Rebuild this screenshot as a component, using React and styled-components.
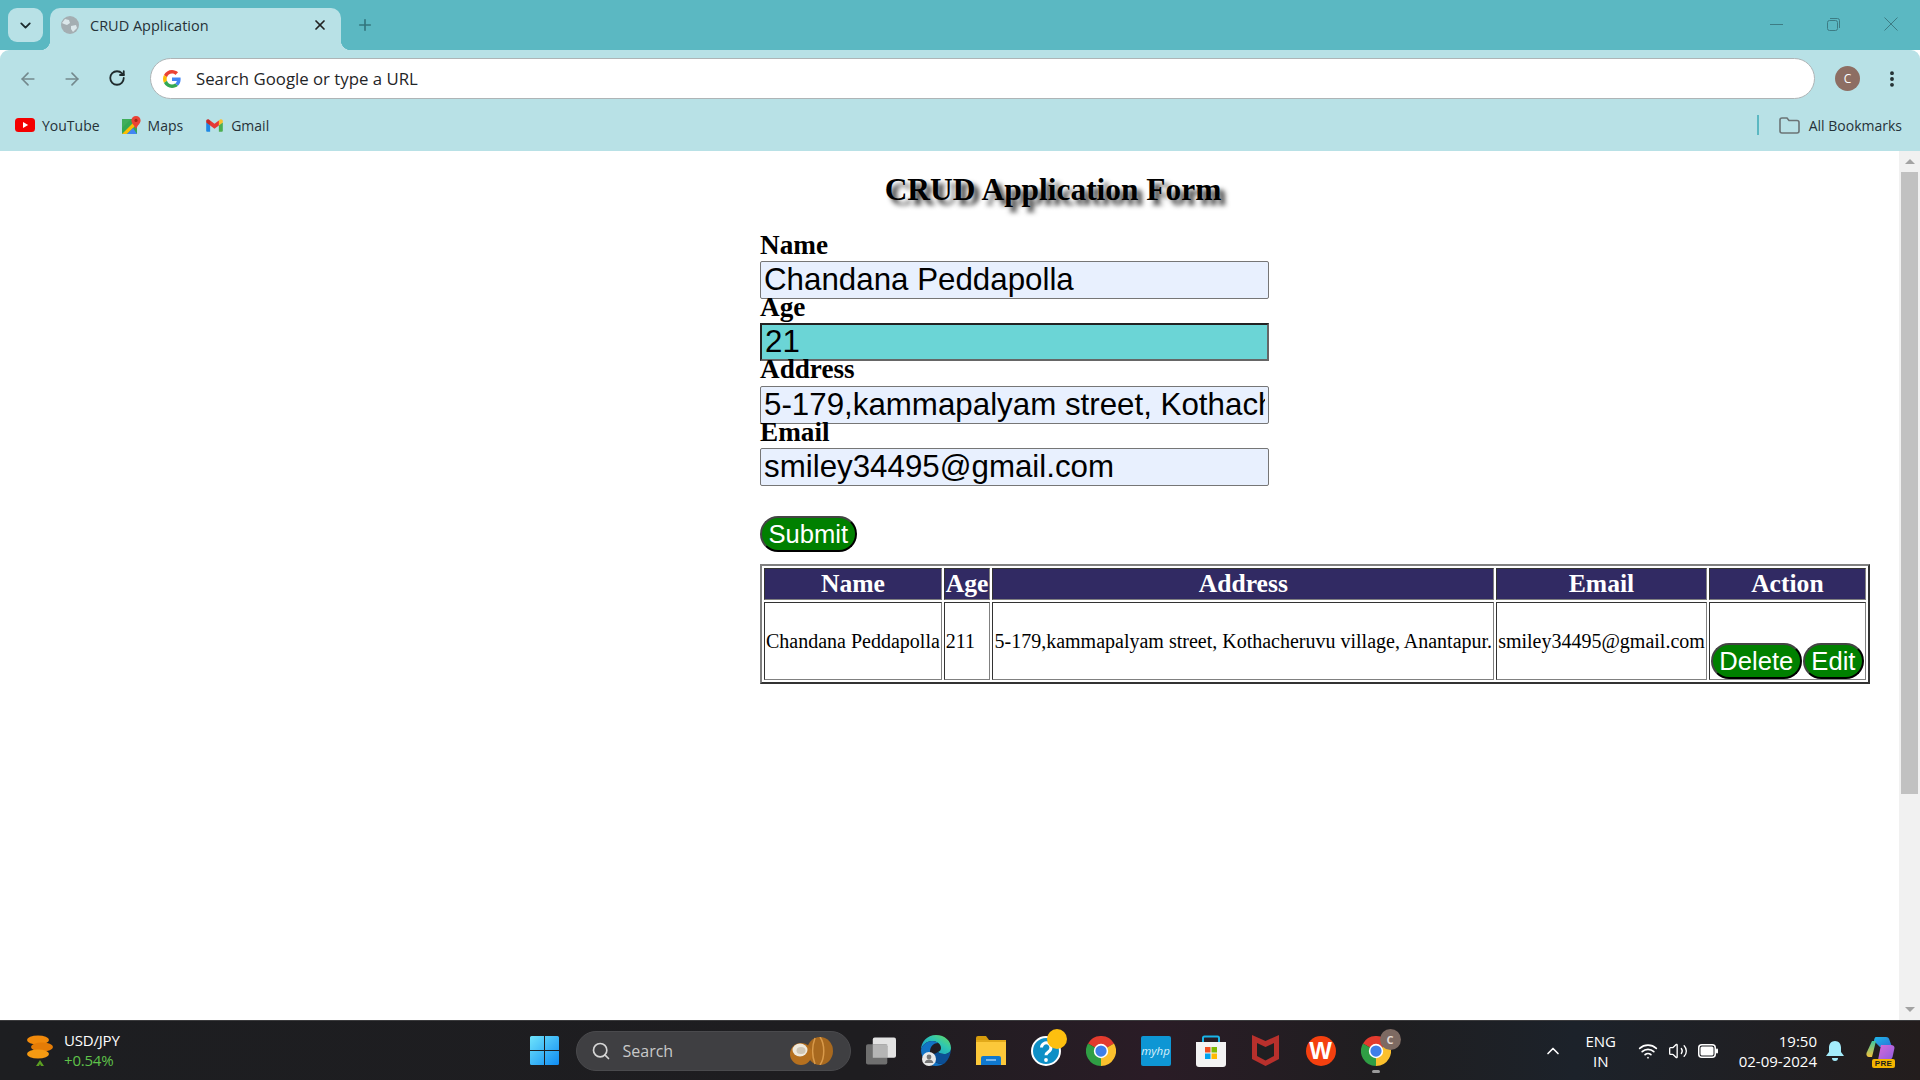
import React from 'react'
import styled, { createGlobalStyle } from 'styled-components'
import {
  ArrowLeft,
  ArrowRight,
  ChevronDown,
  ChevronUp,
  EllipsisVertical,
  Plus,
  RotateCw,
  Search,
  Volume2,
  Wifi,
  X,
} from 'lucide-react'

const UI_FONT = '"Open Sans", "Noto Sans", sans-serif'
const SERIF = '"Liberation Serif", "Times New Roman", serif'
const ARIAL = '"Liberation Sans", Arial, sans-serif'
const FRAME = '#5bb8c2'
const TOOLBAR = '#b8e1e6'

const GlobalStyle = createGlobalStyle`
  html, body { margin: 0; padding: 0; height: 100%; overflow: hidden; }
  body { font-family: ${SERIF}; background: #fff; }
`

const Screen = styled.div`
  width: 1920px;
  height: 1080px;
  display: flex;
  flex-direction: column;
  overflow: hidden;
`

/* browser chrome */
const TabStrip = styled.div`
  height: 50px;
  flex: none;
  background: ${FRAME};
  display: flex;
  align-items: flex-end;
  padding-left: 8px;
`
const TabSearch = styled.div`
  width: 35px;
  height: 34px;
  margin-bottom: 8px;
  margin-right: 7px;
  border-radius: 9px;
  background: ${TOOLBAR};
  color: #1c2b2e;
  display: flex;
  align-items: center;
  justify-content: center;
`
const Tab = styled.div`
  position: relative;
  width: 291px;
  height: 42px;
  box-sizing: border-box;
  padding: 0 13px 8px 11px;
  background: ${TOOLBAR};
  border-radius: 10px 10px 0 0;
  display: flex;
  align-items: center;
  font: 14.5px ${UI_FONT};
  color: #263238;

  &::before,
  &::after {
    content: '';
    position: absolute;
    bottom: 0;
    width: 10px;
    height: 10px;
  }
  &::before {
    left: -10px;
    background: radial-gradient(circle at 0 0, transparent 10px, ${TOOLBAR} 10.5px);
  }
  &::after {
    right: -10px;
    background: radial-gradient(circle at 100% 0, transparent 10px, ${TOOLBAR} 10.5px);
  }
`
const TabTitle = styled.span`
  flex: 1;
  margin-left: 11px;
`
const NewTab = styled.div`
  margin: 0 0 16px 15px;
  color: #33757d;
  display: flex;
`
const WindowControls = styled.div`
  margin-left: auto;
  height: 50px;
  display: flex;
  align-items: center;
  gap: 44px;
  padding-right: 22px;
  padding-bottom: 2px;
  box-sizing: border-box;
`
const Toolbar = styled.div`
  height: 63px;
  flex: none;
  background: ${TOOLBAR};
  border-radius: 9px 9px 0 0;
  display: flex;
  align-items: center;
  box-sizing: border-box;
  padding: 0 16px 6px 18px;
`
const NavButton = styled.div`
  width: 20px;
  height: 20px;
  margin-right: ${p => p.$gap}px;
  color: ${p => (p.$off ? '#74898d' : '#1f2a2c')};
  display: flex;
`
const AddressBar = styled.div`
  width: 1665px;
  height: 41px;
  box-sizing: border-box;
  background: #fff;
  border: 1px solid #aeb4b6;
  border-radius: 21px;
  display: flex;
  align-items: center;
  padding-left: 12px;
  gap: 15px;
  font: 16.8px ${UI_FONT};
  color: #1f2527;
`
const Avatar = styled.div`
  width: 25px;
  height: 25px;
  margin-left: 20px;
  border-radius: 50%;
  background: #8d6e63;
  color: #fff;
  font: 12px ${UI_FONT};
  display: flex;
  align-items: center;
  justify-content: center;
`
const MenuDots = styled.div`
  margin-left: 22px;
  color: #1f2a2c;
  display: flex;
`
const BookmarksBar = styled.div`
  height: 38px;
  flex: none;
  background: ${TOOLBAR};
  box-sizing: border-box;
  padding: 0 18px 14px 15px;
  display: flex;
  align-items: center;
  font: 14px ${UI_FONT};
  color: #263238;
`
const Bookmark = styled.div`
  display: flex;
  align-items: center;
  gap: 7px;
  margin-right: 22px;
`
const BookmarkEnd = styled.div`
  margin-left: auto;
  display: flex;
  align-items: center;
`
const BarDivider = styled.div`
  width: 2px;
  height: 20px;
  background: ${FRAME};
  margin-right: 20px;
`

/* page */
const Viewport = styled.div`
  flex: 1;
  min-height: 0;
  display: flex;
  background: #fff;
`
const Content = styled.main`
  flex: 1;
  padding: 21px 0 0 760px;
`
const Scrollbar = styled.div`
  width: 21px;
  flex: none;
  background: #f1f1f1;
  box-sizing: border-box;
  padding: 0 2px 0 2px;
  display: flex;
  flex-direction: column;
  align-items: center;
`
const ScrollArrow = styled.div`
  height: 21px;
  flex: none;
  display: flex;
  align-items: center;
  width: 0;
  &::before {
    content: '';
    margin-left: -5px;
    border-left: 5px solid transparent;
    border-right: 5px solid transparent;
    ${p => (p.$down ? 'border-top: 5px solid #a3a3a3;' : 'border-bottom: 5px solid #a3a3a3;')}
  }
`
const ScrollThumb = styled.div`
  width: 100%;
  height: 622px;
  background: #c1c1c1;
`
const ScrollRest = styled.div`
  flex: 1;
`
const Title = styled.h1`
  width: 586px;
  margin: 0 0 28.5px;
  font: bold 31.4px/36px ${SERIF};
  text-align: center;
  color: #000;
  text-shadow: 5px 5px 5px #333;
`
const Form = styled.form`
  display: flex;
  flex-direction: column;
  align-items: flex-start;
`
const Field = styled.div`
  display: flex;
  flex-direction: column;
`
const Label = styled.label`
  height: 24.4px;
  font: bold 27.2px/17.4px ${SERIF};
  color: #000;
`
const Input = styled.input`
  width: 509px;
  height: 38px;
  box-sizing: border-box;
  margin: 0;
  padding: 1px 3px;
  font: 31.3px ${ARIAL};
  color: #000;
  background: ${p => (p.$active ? '#6bd5d6' : '#e8f0fe')};
  border: ${p => (p.$active ? '2px solid' : '1px solid #767676')};
  border-color: ${p => (p.$active ? '#222 #666 #666 #222' : '#767676')};
  border-radius: ${p => (p.$active ? '0' : '2px')};
  outline: none;
`
const PillButton = styled.button`
  height: 36px;
  box-sizing: border-box;
  margin: ${p => p.$margin || '0'};
  padding: 0 6.5px;
  font: 25.6px ${ARIAL};
  color: #fff;
  background: #008000;
  border: 2px solid;
  border-color: #444 #000 #000 #444;
  border-radius: 20px;
`
const DataTable = styled.table`
  margin-top: 12px;
  border-collapse: separate;
  border-spacing: 2px;
  border: 2px solid;
  border-color: #808080 #333 #333 #808080;
`
const HeadCell = styled.th`
  padding: 1px;
  height: 28px;
  background: #312a63;
  color: #fff;
  font: bold 25.6px/28px ${SERIF};
  border: 1px solid;
  border-color: #333 #808080 #808080 #333;
`
const BodyCell = styled.td`
  padding: 1px;
  font: 20px ${SERIF};
  color: #000;
  border: 1px solid;
  border-color: #333 #808080 #808080 #333;
`
const ActionRow = styled.div`
  display: flex;
  gap: 1px;
  margin-top: 39px;
  margin-bottom: -1px;
`

/* taskbar */
const Taskbar = styled.footer`
  height: 60px;
  flex: none;
  box-sizing: border-box;
  border-top: 1px solid #3b3b3d;
  background: linear-gradient(90deg, #1d1e21 0%, #1e1d20 45%, #2a1c26 60%, #1f1e20 72%, #1c222a 82%, #231d1d 100%);
  display: grid;
  grid-template-columns: 1fr auto 1fr;
  align-items: center;
  color: #fff;
  font: 14px ${UI_FONT};
`
const Widget = styled.div`
  display: flex;
  align-items: center;
  gap: 10px;
  padding-left: 26px;
`
const WidgetText = styled.div`
  font-size: 15px;
  line-height: 20px;
  letter-spacing: -0.2px;
  margin-top: -2px;
`
const Change = styled.div`
  color: #5fc24a;
`
const Center = styled.div`
  display: flex;
  align-items: center;
`
const TaskSearch = styled.div`
  width: 275px;
  height: 40px;
  margin: 0 15px 0 17px;
  box-sizing: border-box;
  padding: 0 15px 0 14px;
  background: #3f3f42;
  border: 1px solid #4a4a4d;
  border-radius: 20px;
  display: flex;
  align-items: center;
  gap: 12px;
  font-size: 16px;
  color: #c9c9c9;
`
const SearchWord = styled.span`
  flex: 1;
`
const TaskIcon = styled.div`
  position: relative;
  width: 30px;
  height: 30px;
  margin-right: 25px;
  display: flex;
  align-items: center;
  justify-content: center;
  &:last-child {
    margin-right: 0;
  }
`
const RunningDot = styled.div`
  position: absolute;
  bottom: -7px;
  left: 11px;
  width: 8px;
  height: 3px;
  border-radius: 2px;
  background: #9a9a9a;
`
const CountBadge = styled.div`
  position: absolute;
  top: -7px;
  right: -10px;
  width: 21px;
  height: 21px;
  border-radius: 50%;
  background: #7d6a62;
  color: #e4dad5;
  font: bold 11px/21px ${UI_FONT};
  text-align: center;
`
const HpTile = styled.div`
  width: 30px;
  height: 30px;
  box-sizing: border-box;
  border-radius: 2px;
  background: #0e96d4;
  color: #d9f1fb;
  font: italic 11.5px/30px ${UI_FONT};
  text-align: center;
`
const WpsLogo = styled.div`
  width: 30px;
  height: 30px;
  border-radius: 50%;
  background: #f4400f;
  color: #fff;
  font: bold 24px/30px ${ARIAL};
  text-align: center;
`
const Tray = styled.div`
  justify-self: end;
  display: flex;
  align-items: center;
  padding-right: 25px;
`
const Chevron = styled.div`
  display: flex;
  margin-right: 18px;
`
const Lang = styled.div`
  width: 40px;
  margin-right: 17px;
  text-align: center;
  font-size: 15px;
  line-height: 20px;
`
const TrayIcons = styled.div`
  display: flex;
  align-items: center;
  gap: 10px;
`
const Clock = styled.div`
  margin-left: 21px;
  text-align: right;
  font-size: 15px;
  line-height: 20px;
`
const BellSlot = styled.div`
  display: flex;
  margin: 0 22px 0 9px;
`
const Copilot = styled.div`
  position: relative;
  width: 29px;
  height: 30px;
`
const PreTag = styled.div`
  position: absolute;
  right: 0;
  bottom: -2px;
  width: 23px;
  height: 9px;
  background: #f4b400;
  border-radius: 2px;
  color: #1b1b1b;
  font: bold 8px/9px ${ARIAL};
  text-align: center;
  letter-spacing: 0.3px;
`

/* drawn icons */
const Globe = () => (
  <svg width="18" height="18" viewBox="0 0 18 18">
    <circle cx="9" cy="9" r="9" fill="#a4aeb2" />
    <path d="M4 3l4 1 1 3-3 2-3-1-2-1zM10 10l5-1 1 3-4 4-2-3z" fill="#dbe7ea" />
  </svg>
)
const GoogleG = () => (
  <svg width="18" height="18" viewBox="0 0 48 48">
    <path fill="#EA4335" d="M24 9.5c3.54 0 6.71 1.22 9.21 3.6l6.85-6.85C35.9 2.38 30.47 0 24 0 14.62 0 6.51 5.38 2.56 13.22l7.98 6.19C12.43 13.72 17.74 9.5 24 9.5z" />
    <path fill="#4285F4" d="M46.98 24.55c0-1.57-.15-3.09-.38-4.55H24v9.02h12.94c-.58 2.96-2.26 5.48-4.78 7.18l7.73 6c4.51-4.18 7.09-10.36 7.09-17.65z" />
    <path fill="#FBBC05" d="M10.53 28.59c-.48-1.45-.76-2.99-.76-4.59s.27-3.14.76-4.59l-7.98-6.19C.92 16.46 0 20.12 0 24c0 3.88.92 7.54 2.56 10.78l7.97-6.19z" />
    <path fill="#34A853" d="M24 48c6.48 0 11.93-2.13 15.89-5.81l-7.73-6c-2.15 1.45-4.92 2.3-8.16 2.3-6.26 0-11.57-4.22-13.47-9.91l-7.98 6.19C6.51 42.62 14.62 48 24 48z" />
  </svg>
)
const YouTubeIcon = () => (
  <svg width="20" height="14" viewBox="0 0 20 14">
    <rect width="20" height="14" rx="3.5" fill="#f40000" />
    <path d="M8 4l5.2 3L8 10z" fill="#fff" />
  </svg>
)
const MapsIcon = () => (
  <svg width="19" height="19" viewBox="0 0 19 19">
    <rect x="0" y="3" width="15" height="15" fill="#34a853" />
    <path d="M0 18L15 3v5L5 18z" fill="#fbbc04" />
    <path d="M5 18L11 12l4 6z" fill="#4285f4" />
    <path d="M0 3h9L0 12z" fill="#3fae5a" />
    <path d="M14 0c2.6 0 4.6 2 4.6 4.4 0 3-3 4.5-4.6 8.6-1.6-4.1-4.6-5.6-4.6-8.6C9.4 2 11.4 0 14 0z" fill="#ea4335" />
    <circle cx="14" cy="4.4" r="1.6" fill="#a52714" />
  </svg>
)
const GmailIcon = () => (
  <svg width="19" height="19" viewBox="0 0 48 48">
    <path fill="#4caf50" d="M45,16.2l-5,2.75l-5,4.75L35,40h7c1.657,0,3-1.343,3-3V16.2z" />
    <path fill="#1e88e5" d="M3,16.2l3.614,1.71L13,23.7V40H6c-1.657,0-3-1.343-3-3V16.2z" />
    <polygon fill="#e53935" points="35,11.2 24,19.45 13,11.2 12,17 13,23.7 24,31.95 35,23.7 36,17" />
    <path fill="#c62828" d="M3,12.298V16.2l10,7.5V11.2L9.876,8.859C9.132,8.301,8.228,8,7.298,8h0C4.924,8,3,9.924,3,12.298z" />
    <path fill="#fbc02d" d="M45,12.298V16.2l-10,7.5V11.2l3.124-2.341C38.868,8.301,39.772,8,40.702,8h0C43.076,8,45,9.924,45,12.298z" />
  </svg>
)
const FolderOutline = () => (
  <svg width="21" height="17" viewBox="0 0 21 17" style={{ marginRight: 9 }}>
    <path d="M1 3a2 2 0 0 1 2-2h5l2 2.5h8a2 2 0 0 1 2 2V14a2 2 0 0 1-2 2H3a2 2 0 0 1-2-2z" fill="none" stroke="#6b7476" strokeWidth="1.6" />
  </svg>
)
const Minimize = () => (
  <svg width="13" height="13" viewBox="0 0 13 13">
    <path d="M0 6.5h13" stroke="#3d7c84" strokeWidth="1" />
  </svg>
)
const Restore = () => (
  <svg width="13" height="13" viewBox="0 0 13 13" fill="none" stroke="#3d7c84">
    <rect x="0.5" y="2.5" width="10" height="10" rx="2" />
    <path d="M3 .5h7.5a2 2 0 0 1 2 2V10" />
  </svg>
)
const CloseWindow = () => (
  <svg width="14" height="14" viewBox="0 0 14 14">
    <path d="M.5.5l13 13M13.5.5l-13 13" stroke="#3d7c84" strokeWidth="1" />
  </svg>
)
const Coins = () => (
  <svg width="28" height="34" viewBox="0 0 28 34">
    <ellipse cx="12" cy="6" rx="11" ry="4.5" fill="#f18a0b" />
    <ellipse cx="16" cy="13" rx="11" ry="4.5" fill="#e57c06" />
    <ellipse cx="12" cy="20" rx="11" ry="4.5" fill="#f59a12" />
    <path d="M14 26l4 6h-3l-1-2-1 2h-3z" fill="#5b9e22" />
  </svg>
)
const WindowsLogo = () => (
  <svg width="29" height="29" viewBox="0 0 29 29">
    <defs>
      <linearGradient id="win" x1="0" y1="0" x2="1" y2="1">
        <stop offset="0" stopColor="#6fe4fb" />
        <stop offset="1" stopColor="#0f8cf3" />
      </linearGradient>
    </defs>
    <path d="M0 1.5A1.5 1.5 0 0 1 1.5 0H14v14H0zM15 0h12.5A1.5 1.5 0 0 1 29 1.5V14H15zM0 15h14v14H1.5A1.5 1.5 0 0 1 0 27.5zM15 15h14v12.5a1.5 1.5 0 0 1-1.5 1.5H15z" fill="url(#win)" />
  </svg>
)
const Coconut = () => (
  <svg width="46" height="28" viewBox="0 0 46 28">
    <ellipse cx="31" cy="14" rx="13" ry="14" fill="#a8691f" />
    <path d="M31 0c5 7 5 21 0 28M26 1c-3 8-3 18 0 26" stroke="#d99a4a" strokeWidth="1.5" fill="none" />
    <ellipse cx="12" cy="17" rx="11" ry="11" fill="#b5701f" />
    <ellipse cx="11" cy="13" rx="7.5" ry="6.5" fill="#efe9dc" />
    <ellipse cx="12" cy="13.500" rx="4.500" ry="3.500" fill="#cfc6b5" />
  </svg>
)
const TaskView = () => (
  <svg width="31" height="30" viewBox="0 0 31 30">
    <rect x="7" y="1" width="24" height="21" rx="2" fill="#e3e3e3" />
    <rect x="0" y="8" width="22" height="21" rx="2" fill="#6f6f6f" />
    <rect x="7" y="8" width="15" height="14" fill="#b5b5b5" />
  </svg>
)
const Edge = () => (
  <svg width="30" height="31" viewBox="0 0 30 31">
    <defs>
      <linearGradient id="edgeTop" x1="0" y1="1" x2="1" y2="0">
        <stop offset="0" stopColor="#0f8fd6" />
        <stop offset="0.6" stopColor="#2fc6b0" />
        <stop offset="1" stopColor="#6bdc5a" />
      </linearGradient>
    </defs>
    <path d="M15 0c9 0 15 6 15 13 0 4-3 6-7 6-3 0-5-1-6-2 2-1 3-2 3-4 0-4-4-7-9-7C6 6 1 10 0 15 0 7 6 0 15 0z" fill="url(#edgeTop)" />
    <path d="M0 15c1-5 6-9 11-9 3 0 5 1 6 2-4 0-8 3-8 9 0 6 5 12 12 12 1 0 2 0 3-1-3 2-6 3-9 3C7 31 0 24 0 15z" fill="#1273c4" />
    <path d="M17 17c1 1 3 2 6 2 4 0 7-2 7-6 0 7-3 12-6 15-1 1-2 1-3 1-7 0-12-6-12-12 1 2 4 3 8 0z" fill="#0c4f95" />
    <circle cx="8" cy="24" r="7" fill="#e9e9e9" />
    <circle cx="8" cy="22" r="2.4" fill="#777" />
    <path d="M3.6 28c.6-2.6 2.4-3.4 4.4-3.4s3.8.8 4.4 3.4z" fill="#777" />
  </svg>
)
const Explorer = () => (
  <svg width="30" height="29" viewBox="0 0 30 29">
    <path d="M0 2a2 2 0 0 1 2-2h8l3 4H0z" fill="#d79c0d" />
    <rect y="4" width="30" height="25" fill="#fcc83a" />
    <rect y="4" width="30" height="2" fill="#e2a91a" />
    <path d="M5 22a2 2 0 0 1 2-2h16a2 2 0 0 1 2 2v7H5z" fill="#0f78cf" />
    <path d="M10 24h10" stroke="#bfe3ff" strokeWidth="1.2" />
  </svg>
)
const HelpIcon = () => (
  <svg width="30" height="30" viewBox="0 0 30 30" overflow="visible">
    <circle cx="15" cy="15" r="14" fill="#0e8fc6" stroke="#fff" strokeWidth="2" />
    <path d="M10.5 11.500a4.700 4.700 0 1 1 7 4.200c-1.600 1-2.500 1.700-2.500 3.600" fill="none" stroke="#fff" strokeWidth="3" />
    <circle cx="15" cy="24" r="1.900" fill="#fff" />
    <circle cx="26" cy="3" r="10" fill="#fdbf0f" />
  </svg>
)
const Chrome = () => (
  <svg width="30" height="30" viewBox="0 0 48 48">
    <path d="M24 24L3.2 12A24 24 0 0 1 44.8 12z" fill="#e33b2e" />
    <path d="M24 24L3.2 12A24 24 0 0 0 24 48z" fill="#2f9e44" />
    <path d="M24 24L44.8 12A24 24 0 0 1 24 48z" fill="#fbc02d" />
    <circle cx="24" cy="24" r="11.5" fill="#fff" />
    <circle cx="24" cy="24" r="9" fill="#3f7fe8" />
  </svg>
)
const Store = () => (
  <svg width="30" height="32" viewBox="0 0 30 32">
    <path d="M7 7V3a1.5 1.5 0 0 1 1.5-1.5h13A1.5 1.5 0 0 1 23 3v4" fill="none" stroke="#19b4e8" strokeWidth="2" />
    <path d="M0 7h30v22a3 3 0 0 1-3 3H3a3 3 0 0 1-3-3z" fill="#f3f3f3" />
    <rect x="9" y="12" width="5.5" height="5.5" fill="#f25022" />
    <rect x="15.5" y="12" width="5.5" height="5.5" fill="#7fba00" />
    <rect x="9" y="18.5" width="5.5" height="5.5" fill="#00a4ef" />
    <rect x="15.5" y="18.5" width="5.5" height="5.5" fill="#ffb900" />
  </svg>
)
const McAfee = () => (
  <svg width="27" height="31" viewBox="0 0 27 31">
    <path d="M0 0l13.5 6L27 0v24l-13.5 7L0 24z" fill="#b8302c" />
    <path d="M5 8l8.5 4L22 8v13l-8.5 4.5L5 21z" fill="#1f1f21" />
  </svg>
)
const WifiTray = () => <Wifi size={20} color="#fff" strokeWidth={2} />
const Battery = () => (
  <svg width="20" height="14" viewBox="0 0 20 14">
    <rect x="0.75" y="0.75" width="16.5" height="12.5" rx="3" fill="none" stroke="#fff" strokeWidth="1.5" />
    <rect x="2.500" y="2.500" width="13" height="9" rx="1.5" fill="#fff" />
    <rect x="18" y="4.500" width="2" height="5" rx="1" fill="#fff" />
  </svg>
)
const Bell = () => (
  <svg width="18" height="20" viewBox="0 0 18 20">
    <path d="M9 0c3.600 0 6 2.800 6 6.500V11l3 4H0l3-4V6.500C3 2.800 5.400 0 9 0z" fill="#a4ecfb" />
    <path d="M6 17h6a3 3 0 0 1-6 0z" fill="#a4ecfb" />
  </svg>
)
const CopilotMark = () => (
  <svg width="29" height="26" viewBox="0 0 29 26">
    <defs>
      <linearGradient id="cpA" x1="0" y1="0" x2="1" y2="1">
        <stop offset="0" stopColor="#1fb8e8" />
        <stop offset="1" stopColor="#2d6fd8" />
      </linearGradient>
      <linearGradient id="cpB" x1="0" y1="0" x2="0" y2="1">
        <stop offset="0" stopColor="#3dc7a0" />
        <stop offset="1" stopColor="#f3c13a" />
      </linearGradient>
      <linearGradient id="cpC" x1="0" y1="0" x2="1" y2="1">
        <stop offset="0" stopColor="#d76bd8" />
        <stop offset="1" stopColor="#8d5ce0" />
      </linearGradient>
    </defs>
    <path d="M10 1h10c2 0 3 1 3.500 3L26 11H14L8 5c0-2 1-4 2-4z" fill="url(#cpA)" />
    <path d="M6 5h4l-4 16H3C1 21 0 19 .5 17z" fill="url(#cpB)" />
    <path d="M15 9h10c2 0 3.500 1 3.500 3l-2 9c-.5 2-2 3-4 3H12z" fill="url(#cpC)" />
  </svg>
)

const App = () => {
  return (
    <Screen>
      <GlobalStyle />
      <TabStrip>
        <TabSearch>
          <ChevronDown size={17} strokeWidth={2.6} />
        </TabSearch>
        <Tab>
          <Globe />
          <TabTitle>CRUD Application</TabTitle>
          <X size={16} strokeWidth={2.6} color="#222" />
        </Tab>
        <NewTab>
          <Plus size={18} strokeWidth={2.2} />
        </NewTab>
        <WindowControls>
          <Minimize />
          <Restore />
          <CloseWindow />
        </WindowControls>
      </TabStrip>
      <Toolbar>
        <NavButton $off $gap={24}>
          <ArrowLeft size={20} />
        </NavButton>
        <NavButton $off $gap={26}>
          <ArrowRight size={20} />
        </NavButton>
        <NavButton $gap={22}>
          <RotateCw size={18} strokeWidth={2.4} />
        </NavButton>
        <AddressBar>
          <GoogleG />
          Search Google or type a URL
        </AddressBar>
        <Avatar>C</Avatar>
        <MenuDots>
          <EllipsisVertical size={20} strokeWidth={2.6} />
        </MenuDots>
      </Toolbar>
      <BookmarksBar>
        <Bookmark>
          <YouTubeIcon />
          YouTube
        </Bookmark>
        <Bookmark>
          <MapsIcon />
          Maps
        </Bookmark>
        <Bookmark>
          <GmailIcon />
          Gmail
        </Bookmark>
        <BookmarkEnd>
          <BarDivider />
          <FolderOutline />
          All Bookmarks
        </BookmarkEnd>
      </BookmarksBar>

      <Viewport>
        <Content>
          <Title>CRUD Application Form</Title>
          <Form onSubmit={e => e.preventDefault()}>
            <Field>
              <Label>Name</Label>
              <Input readOnly value="Chandana Peddapolla" />
            </Field>
            <Field>
              <Label>Age</Label>
              <Input readOnly $active value="21" />
            </Field>
            <Field>
              <Label>Address</Label>
              <Input readOnly value="5-179,kammapalyam street, Kothacheruvu village, Anantapur." />
            </Field>
            <Field>
              <Label>Email</Label>
              <Input readOnly value="smiley34495@gmail.com" />
            </Field>
            <PillButton $margin="30px 0 0">Submit</PillButton>
          </Form>
          <DataTable>
            <thead>
              <tr>
                <HeadCell>Name</HeadCell>
                <HeadCell>Age</HeadCell>
                <HeadCell>Address</HeadCell>
                <HeadCell>Email</HeadCell>
                <HeadCell>Action</HeadCell>
              </tr>
            </thead>
            <tbody>
              <tr>
                <BodyCell>Chandana Peddapolla</BodyCell>
                <BodyCell>211</BodyCell>
                <BodyCell>5-179,kammapalyam street, Kothacheruvu village, Anantapur.</BodyCell>
                <BodyCell>smiley34495@gmail.com</BodyCell>
                <BodyCell>
                  <ActionRow>
                    <PillButton>Delete</PillButton>
                    <PillButton>Edit</PillButton>
                  </ActionRow>
                </BodyCell>
              </tr>
            </tbody>
          </DataTable>
        </Content>
        <Scrollbar>
          <ScrollArrow />
          <ScrollThumb />
          <ScrollRest />
          <ScrollArrow $down />
        </Scrollbar>
      </Viewport>

      <Taskbar>
        <Widget>
          <Coins />
          <WidgetText>
            <div>USD/JPY</div>
            <Change>+0.54%</Change>
          </WidgetText>
        </Widget>
        <Center>
          <WindowsLogo />
          <TaskSearch>
            <Search size={20} color="#d5d5d5" />
            <SearchWord>Search</SearchWord>
            <Coconut />
          </TaskSearch>
          <TaskIcon>
            <TaskView />
          </TaskIcon>
          <TaskIcon>
            <Edge />
          </TaskIcon>
          <TaskIcon>
            <Explorer />
          </TaskIcon>
          <TaskIcon>
            <HelpIcon />
          </TaskIcon>
          <TaskIcon>
            <Chrome />
          </TaskIcon>
          <TaskIcon>
            <HpTile>myhp</HpTile>
          </TaskIcon>
          <TaskIcon>
            <Store />
          </TaskIcon>
          <TaskIcon>
            <McAfee />
          </TaskIcon>
          <TaskIcon>
            <WpsLogo>W</WpsLogo>
          </TaskIcon>
          <TaskIcon>
            <Chrome />
            <CountBadge>C</CountBadge>
            <RunningDot />
          </TaskIcon>
        </Center>
        <Tray>
          <Chevron>
            <ChevronUp size={20} color="#fff" strokeWidth={2} />
          </Chevron>
          <Lang>
            ENG
            <br />
            IN
          </Lang>
          <TrayIcons>
            <WifiTray />
            <Volume2 size={20} color="#fff" strokeWidth={1.6} />
            <Battery />
          </TrayIcons>
          <Clock>
            19:50
            <br />
            02-09-2024
          </Clock>
          <BellSlot>
            <Bell />
          </BellSlot>
          <Copilot>
            <CopilotMark />
            <PreTag>PRE</PreTag>
          </Copilot>
        </Tray>
      </Taskbar>
    </Screen>
  )
}

export default App
